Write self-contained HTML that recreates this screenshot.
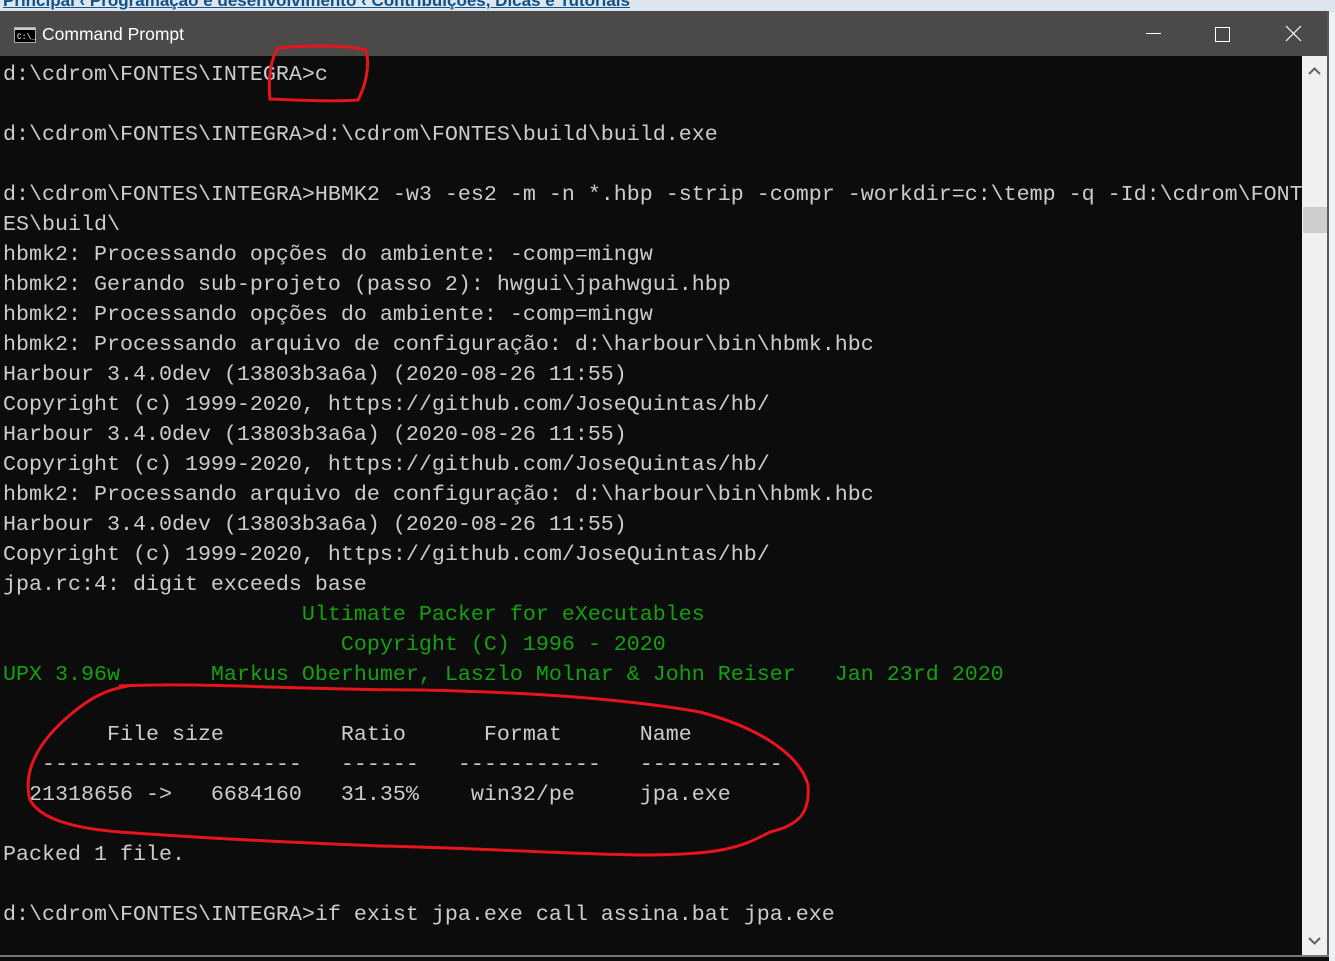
<!DOCTYPE html>
<html><head><meta charset="utf-8"><style>
html,body{margin:0;padding:0;width:1335px;height:961px;overflow:hidden;background:#eef1f4;position:relative}
#top{position:absolute;left:0;top:0;width:1335px;height:12px;background:#dde5ee;overflow:hidden}
#top span{position:absolute;left:3px;top:-9px;font:bold 17px "Liberation Sans",sans-serif;color:#105289;white-space:pre;text-decoration:underline}
#title{position:absolute;left:0;top:11px;width:1329px;height:45px;background:#4b4a48}
#title .t{position:absolute;left:42px;top:13px;font:17.5px "Liberation Sans",sans-serif;color:#fff}
#con{position:absolute;left:0;top:56px;width:1302px;height:900px;background:#0c0c0c;overflow:hidden}
#sb{position:absolute;left:1302px;top:56px;width:25px;height:900px;background:#f0f0f0}
#thumb{position:absolute;left:1303px;top:207px;width:24px;height:26px;background:#cdcdcd}
#rb{position:absolute;left:1327px;top:11px;width:2px;height:946px;background:#5a5a5a}
#bb{position:absolute;left:0;top:955px;width:1329px;height:6px;background:#0c0c0c;border-top:2px solid #777}
pre{margin:0;position:absolute;left:3px;top:60px;font:21.67px/30px "Liberation Mono",monospace;color:#cccccc}
.g{color:#13a10e}
</style></head><body>
<div id="top"><span>Principal ‹ Programação e desenvolvimento ‹ Contribuições, Dicas e Tutoriais</span></div>
<div id="title">
<svg style="position:absolute;left:14px;top:16px" width="22" height="16"><rect x="0.5" y="0.5" width="21" height="15" fill="#000" stroke="#aaa"/><rect x="1" y="1" width="20" height="2" fill="#ccc"/><text x="3" y="12" font-size="8" font-family="Liberation Mono" fill="#fff">C:\_</text></svg>
<span class="t">Command Prompt</span>
<svg style="position:absolute;left:1140px;top:14px" width="170" height="18"><line x1="6" y1="8.5" x2="21" y2="8.5" stroke="#fff"/><rect x="75.5" y="2.5" width="14" height="14" fill="none" stroke="#fff"/><path d="M146 1L161 16M161 1L146 16" stroke="#fff" stroke-width="1.2"/></svg>
</div>
<div id="con"></div>
<div id="sb"><svg width="25" height="900"><path d="M7 18L12.5 12.5L18 18" fill="none" stroke="#606060" stroke-width="2"/><path d="M7 882L12.5 887.5L18 882" fill="none" stroke="#606060" stroke-width="2"/></svg></div>
<div id="thumb"></div>
<div id="rb"></div>
<div id="bb"></div>
<pre>d:\cdrom\FONTES\INTEGRA>c

d:\cdrom\FONTES\INTEGRA>d:\cdrom\FONTES\build\build.exe

d:\cdrom\FONTES\INTEGRA>HBMK2 -w3 -es2 -m -n *.hbp -strip -compr -workdir=c:\temp -q -Id:\cdrom\FONT
ES\build\
hbmk2: Processando opções do ambiente: -comp=mingw
hbmk2: Gerando sub-projeto (passo 2): hwgui\jpahwgui.hbp
hbmk2: Processando opções do ambiente: -comp=mingw
hbmk2: Processando arquivo de configuração: d:\harbour\bin\hbmk.hbc
Harbour 3.4.0dev (13803b3a6a) (2020-08-26 11:55)
Copyright (c) 1999-2020, https://github.com/JoseQuintas/hb/
Harbour 3.4.0dev (13803b3a6a) (2020-08-26 11:55)
Copyright (c) 1999-2020, https://github.com/JoseQuintas/hb/
hbmk2: Processando arquivo de configuração: d:\harbour\bin\hbmk.hbc
Harbour 3.4.0dev (13803b3a6a) (2020-08-26 11:55)
Copyright (c) 1999-2020, https://github.com/JoseQuintas/hb/
jpa.rc:4: digit exceeds base
<span class="g">                       Ultimate Packer for eXecutables
                          Copyright (C) 1996 - 2020
UPX 3.96w       Markus Oberhumer, Laszlo Molnar &amp; John Reiser   Jan 23rd 2020</span>

        File size         Ratio      Format      Name
   --------------------   ------   -----------   -----------
  21318656 ->   6684160   31.35%    win32/pe     jpa.exe

Packed 1 file.

d:\cdrom\FONTES\INTEGRA>if exist jpa.exe call assina.bat jpa.exe</pre>
<svg style="position:absolute;left:0;top:0" width="1335" height="961"><g fill="none" stroke="#e8141c" stroke-width="3" stroke-linecap="round">
<path d="M278 48C300 46 340 44 366 50C370 65 366 85 358 100C330 102 298 100 270 99C268 82 270 60 278 48"/>
<path d="M120 686C200 682 300 690 420 690C520 692 620 698 700 712C760 728 800 755 808 785C810 812 800 825 770 832C740 848 720 855 640 855C560 854 480 848 380 846C280 842 200 838 120 832C70 828 40 818 30 800C22 770 40 740 70 715C90 698 105 690 128 686"/>
</g></svg>
</body></html>
